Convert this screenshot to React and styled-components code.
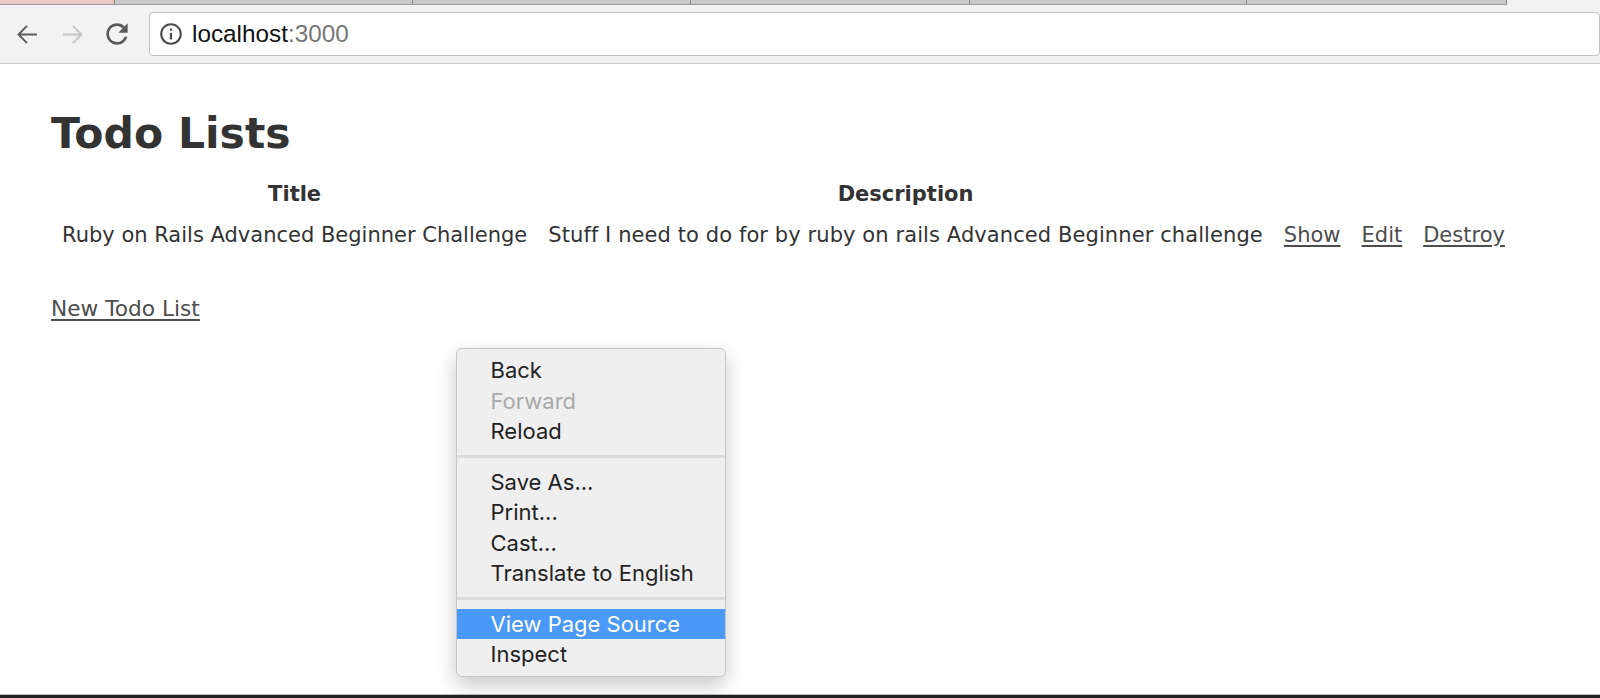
import React from "react";
import styled, { createGlobalStyle } from "styled-components";

const GlobalStyle = createGlobalStyle`
    html, body {
        margin: 0;
        padding: 0;
        background: #ffffff;
    }
    * {
        box-sizing: border-box;
    }
`;

const todoLists = [
    {
        title: "Ruby on Rails Advanced Beginner Challenge",
        description: "Stuff I need to do for by ruby on rails Advanced Beginner challenge",
    },
];

const menuGroups = [
    [{ label: "Back" }, { label: "Forward", disabled: true }, { label: "Reload" }],
    [{ label: "Save As..." }, { label: "Print..." }, { label: "Cast..." }, { label: "Translate to English" }],
    [{ label: "View Page Source", active: true }, { label: "Inspect" }],
];

const ArrowIcon = ({ flip }) => (
    <svg width="21" height="19" viewBox="0 0 22 20" style={flip ? { transform: "scaleX(-1)" } : undefined}>
        <path d="M1.5 10H21M10.5 1L1.5 10L10.5 19" fill="none" stroke="currentColor" strokeWidth="2" />
    </svg>
);

const ReloadIcon = () => (
    <svg width="32" height="32" viewBox="0 0 24 24">
        <path
            fill="currentColor"
            d="M17.65 6.35C16.2 4.9 14.21 4 12 4c-4.42 0-7.99 3.58-7.99 8s3.57 8 7.99 8c3.73 0 6.84-2.55 7.73-6h-2.08c-.82 2.33-3.04 4-5.65 4-3.31 0-6-2.69-6-6s2.69-6 6-6c1.66 0 3.14.69 4.22 1.78L13 11h7V4l-2.35 2.35z"
        />
    </svg>
);

const InfoIcon = () => (
    <svg width="26" height="26" viewBox="0 0 24 24">
        <path
            fill="currentColor"
            d="M11 7h2v2h-2zm0 4h2v6h-2zm1-9C6.48 2 2 6.48 2 12s4.48 10 10 10 10-4.48 10-10S17.52 2 12 2zm0 18c-4.41 0-8-3.59-8-8s3.59-8 8-8 8 3.59 8 8-3.59 8-8 8z"
        />
    </svg>
);

const App = () => {
    return (
        <Window>
            <GlobalStyle />
            <TabStrip>
                <Tab $first $width={115} />
                <Tab $width={298} />
                <Tab $width={278} />
                <Tab $width={279} />
                <Tab $width={277} />
                <Tab $width={260} />
            </TabStrip>
            <Toolbar>
                <NavButton>
                    <ArrowIcon />
                </NavButton>
                <NavButton $disabled>
                    <ArrowIcon flip />
                </NavButton>
                <NavButton>
                    <ReloadIcon />
                </NavButton>
                <Omnibox>
                    <InfoIcon />
                    <Url>
                        localhost<span>:3000</span>
                    </Url>
                </Omnibox>
            </Toolbar>
            <Page>
                <Heading>Todo Lists</Heading>
                <Table>
                    <thead>
                        <tr>
                            <th>Title</th>
                            <th>Description</th>
                            <th colSpan="3"></th>
                        </tr>
                    </thead>
                    <tbody>
                        {todoLists.map((list) => (
                            <tr key={list.title}>
                                <td>{list.title}</td>
                                <Description>{list.description}</Description>
                                <td>
                                    <PageLink href="#">Show</PageLink>
                                </td>
                                <td>
                                    <PageLink href="#">Edit</PageLink>
                                </td>
                                <td>
                                    <PageLink href="#">Destroy</PageLink>
                                </td>
                            </tr>
                        ))}
                    </tbody>
                </Table>
                <NewLink href="#">New Todo List</NewLink>

                <ContextMenu>
                    {menuGroups.map((group, gi) => (
                        <React.Fragment key={gi}>
                            {gi > 0 && <Separator />}
                            {group.map((item) => (
                                <MenuItem key={item.label} $disabled={item.disabled} $active={item.active}>
                                    {item.label}
                                </MenuItem>
                            ))}
                        </React.Fragment>
                    ))}
                </ContextMenu>
            </Page>
            <BottomEdge />
        </Window>
    );
};

export default App;

const Window = styled.div`
    display: flex;
    flex-direction: column;
    width: 1600px;
    height: 698px;
    overflow: hidden;
    background: #ffffff;
`;

const TabStrip = styled.div`
    display: flex;
    height: 5px;
    background: #f1f1f1;
    flex-shrink: 0;
`;

const Tab = styled.div`
    width: ${(p) => p.$width}px;
    height: 5px;
    background: ${(p) => (p.$first ? "#e8c9c4" : "#c9c9c9")};
    border-bottom: 1px solid #9c9c9c;
    border-right: 1px solid #8a8a8a;
`;

const Toolbar = styled.div`
    display: flex;
    align-items: center;
    height: 59px;
    flex-shrink: 0;
    padding: 0 0 0 15px;
    background: #f2f2f2;
    border-bottom: 1px solid #c9c9c9;
    box-shadow: inset 0 -6px 0 #f0f0f0;
`;

const NavButton = styled.div`
    display: flex;
    align-items: center;
    justify-content: center;
    flex-shrink: 0;
    width: 24px;
    height: 24px;
    margin-right: 21px;
    color: ${(p) => (p.$disabled ? "#c4c4c4" : "#5a5a5a")};

    svg {
        flex-shrink: 0;
    }
`;

const Omnibox = styled.div`
    display: flex;
    align-items: center;
    gap: 8px;
    height: 44px;
    margin-left: -1px;
    width: 1480px;
    padding-left: 8px;
    background: #ffffff;
    border: 1px solid #c2c2c2;
    border-radius: 4px;
    color: #4a4a4a;

    svg {
        flex-shrink: 0;
    }
`;

const Url = styled.div`
    font-family: "Liberation Sans", Arial, sans-serif;
    font-size: 24.3px;
    color: #111;

    span {
        color: #767676;
    }
`;

const Page = styled.div`
    position: relative;
    flex: 1;
    padding: 0 0 0 51px;
    font-family: "DejaVu Sans", Verdana, sans-serif;
    color: #333333;
`;

const Heading = styled.h1`
    margin: 45px 0 15px;
    font-size: 42.5px;
    font-weight: bold;
    line-height: 49px;
    color: #333333;
`;

const Table = styled.table`
    border-collapse: separate;
    border-spacing: 1px;
    font-size: 21px;

    th,
    td {
        padding: 8px 10px 7px;
        line-height: 25px;
        white-space: nowrap;
    }

    th {
        font-weight: bold;
    }
`;

const Description = styled.td`
    letter-spacing: 0.09px;
`;

const PageLink = styled.a`
    color: #4d4d4d;
    text-decoration: underline;
    text-underline-offset: 3px;
`;

const NewLink = styled(PageLink)`
    display: inline-block;
    margin-top: 40px;
    font-size: 21.7px;
`;

const ContextMenu = styled.div`
    position: absolute;
    left: 456px;
    top: 284px;
    width: 270px;
    padding: 6px 0;
    background: #efefef;
    border: 1px solid #c6c6c6;
    border-radius: 6px;
    box-shadow: 0 8px 20px rgba(0, 0, 0, 0.22);
    font-family: Inter, "Liberation Sans", sans-serif;
`;

const MenuItem = styled.div`
    height: 30.5px;
    padding-left: 33.5px;
    font-size: 22px;
    line-height: 30.5px;
    color: ${(p) => (p.$active ? "#ffffff" : p.$disabled ? "#a9a9a9" : "#222222")};
    background: ${(p) => (p.$active ? "#4a99f8" : "transparent")};
`;

const Separator = styled.div`
    height: 20px;
    display: flex;
    align-items: center;

    &::after {
        content: "";
        flex: 1;
        height: 3px;
        background: #dcdcdc;
    }
`;

const BottomEdge = styled.div`
    height: 4px;
    flex-shrink: 0;
    background: #222;
    border-top: 1px solid #bdbdbd;
`;
